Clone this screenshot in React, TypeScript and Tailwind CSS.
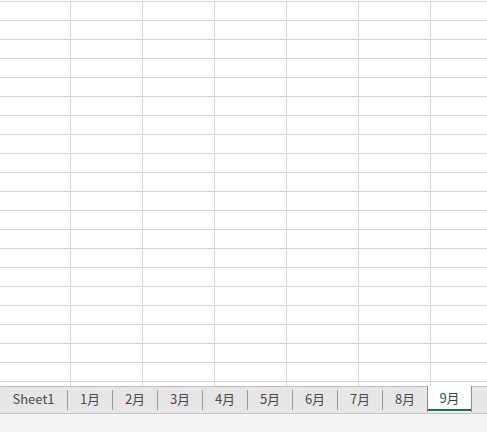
import React from "react";

const ROWS = 20;
const COLS = 7;

function GridRow({ h, last }: { h: string; last?: boolean }) {
  return (
    <div className={`flex shrink-0 ${h} ${last ? "" : "border-b border-[#d4d4d4]"}`}>
      {Array.from({ length: COLS }).map((_, i) => (
        <div
          key={i}
          className={`shrink-0 h-full border-r border-[#d4d4d4] ${i === 0 ? "w-[71px]" : "w-[72px]"}`}
        />
      ))}
    </div>
  );
}

const tabs = ["1月", "2月", "3月", "4月", "5月", "6月", "7月", "8月"];

export default function App() {
  return (
    <div
      className="w-[487px] h-[432px] overflow-hidden bg-white flex flex-col"
      style={{ fontFamily: '"Noto Sans CJK SC", "Noto Sans", sans-serif' }}
    >
      <div className="h-[386px] shrink-0 overflow-hidden flex flex-col bg-white">
        <GridRow h="h-[2px]" />
        {Array.from({ length: ROWS }).map((_, i) => (
          <GridRow key={i} h="h-[19px]" />
        ))}
        <GridRow h="h-[10px]" last />
      </div>
      <div className="h-[28px] shrink-0 flex bg-[#e6e6e6] border-b border-[#c6c6c6] relative">
        <div className="absolute left-0 right-0 top-0 h-px bg-[#bdbdbd]" />
        <div className="w-[67px] shrink-0 flex items-center justify-center text-[13px] text-[#4a4a4a] pb-[3px] pt-px">
          Sheet1
        </div>
        {tabs.map((t) => (
          <React.Fragment key={t}>
            <div className="w-px h-[20px] mt-[4px] bg-[#9a9a9a] shrink-0" />
            <div className="w-[44px] shrink-0 flex items-center justify-center text-[13px] text-[#4a4a4a] pb-[3px] pt-px">
              {t}
            </div>
          </React.Fragment>
        ))}
        <div className="w-[45px] h-[26px] shrink-0 bg-white border-l border-r border-[#8c8c8c] relative z-10 flex items-center justify-center text-[13px] text-[#2b4f3f] pb-[3px]">
          9月
          <div className="absolute left-0 right-0 bottom-[1px] h-[2px] bg-[#217346]" />
        </div>
      </div>
      <div className="flex-1 bg-[#f3f3f3]" />
    </div>
  );
}
